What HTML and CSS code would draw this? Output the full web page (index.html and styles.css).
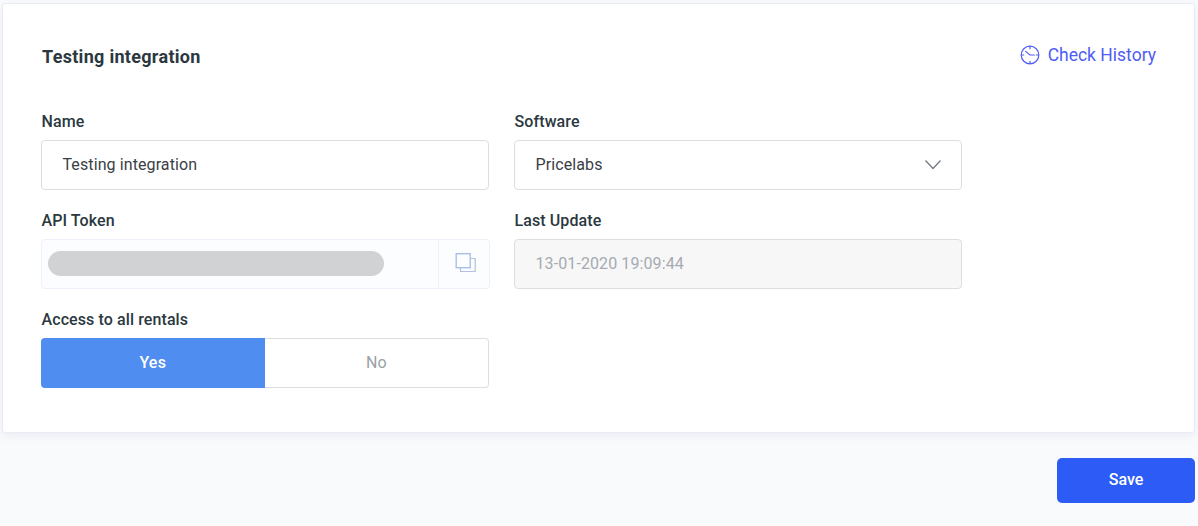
FILE: index.html
```html
<!DOCTYPE html>
<html lang="en">
<head>
<meta charset="utf-8">
<title>Testing integration</title>
<link rel="stylesheet" href="styles.css">
</head>
<body>
<main class="page">
  <section class="card">
    <header class="card-head">
      <h1 class="title">Testing integration</h1>
      <a class="history" href="#">
        <svg class="history-icon" width="20" height="20" viewBox="0 0 20 20" fill="none" stroke="currentColor" stroke-width="1.2" stroke-linecap="round"><circle cx="10" cy="10" r="8.8"/><path d="M10 1.5v2.2M10 16.3v2.2M1.5 10h2.2M16.3 10h2.2M5.6 6.4 10 10h4.4"/></svg>
        <span>Check History</span>
      </a>
    </header>
    <div class="form">
      <div class="field">
        <label class="label">Name</label>
        <div class="control">Testing integration</div>
      </div>
      <div class="field">
        <label class="label">Software</label>
        <div class="control select">
          <span>Pricelabs</span>
          <svg class="chevron" width="18" height="11" viewBox="0 0 18 11" fill="none" stroke="#6f7780" stroke-width="1.2"><path d="M1.500 1.500l7.500 8 7.500-8"/></svg>
        </div>
      </div>
      <div class="field">
        <label class="label">API Token</label>
        <div class="token">
          <div class="token-value"><div class="token-mask"></div></div>
          <div class="token-copy">
            <svg class="copy-icon" width="22" height="20" viewBox="0 0 22 20" fill="none"><rect x="1.200" y="0.700" width="14" height="14" stroke="#a9c0e6" stroke-width="1.4"/><path d="M16 5.500H20.200V18.500H5.500V15" stroke="#b4bfe2" stroke-width="1.2"/></svg>
          </div>
        </div>
      </div>
      <div class="field">
        <label class="label">Last Update</label>
        <div class="control disabled">13-01-2020 19:09:44</div>
      </div>
      <div class="field">
        <label class="label">Access to all rentals</label>
        <div class="toggle">
          <div class="toggle-opt active">Yes</div>
          <div class="toggle-opt inactive">No</div>
        </div>
      </div>
    </div>
  </section>
  <footer class="actions">
    <button class="save" type="button">Save</button>
  </footer>
</main>
</body>
</html>
```
FILE: styles.css
```css
* { box-sizing: border-box; }
html, body { margin: 0; height: 100%; }
body {
  background: #f9fafc;
  font-family: Roboto, "Liberation Sans", sans-serif;
  color: #2b3840;
  overflow: hidden;
}
.page { padding: 3px 3px 0 2px; }
.card {
  height: 430px;
  background: #fff;
  border: 1px solid #e9ebf5;
  border-radius: 3px;
  box-shadow: 0 3px 8px rgba(80, 90, 150, 0.08);
  padding: 0 38px;
}
.card-head {
  display: flex;
  justify-content: space-between;
  align-items: flex-start;
  height: 108px;
}
.title {
  margin: 41px 0 0 1px;
  font-size: 18px;
  line-height: 24px;
  font-weight: 700;
  letter-spacing: 0.3px;
  color: #2b3840;
}
.history {
  display: flex;
  align-items: center;
  gap: 8px;
  margin-top: 39px;
  font-size: 17.5px;
  line-height: 24px;
  color: #4f5cf5;
  text-decoration: none;
}
.form {
  display: grid;
  grid-template-columns: 448px 448px;
  column-gap: 25px;
  row-gap: 21px;
}
.label {
  display: block;
  padding-left: 0.5px;
  font-size: 16px;
  line-height: 20px;
  font-weight: 500;
  letter-spacing: 0.1px;
  color: #2b3840;
  margin-bottom: 8px;
}
.control {
  display: flex;
  align-items: center;
  height: 50px;
  padding: 0 20px 2px 20.5px;
  border: 1px solid #dcdfe2;
  border-radius: 4px;
  background: #fff;
  font-size: 16px;
  letter-spacing: 0.1px;
  color: #3a4046;
}
.select { justify-content: space-between; }
.chevron { margin-right: -1px; }
.disabled { background: #f7f7f7; color: #a5abb2; }
.token {
  display: flex;
  height: 50px;
  width: 449px;
  border: 1px solid #eef0fb;
  border-radius: 4px;
  background: #fcfdff;
}
.token-value { flex: 1; display: flex; align-items: center; padding: 0 0 1px 6px; }
.token-mask { width: 336px; height: 25px; border-radius: 13px; background: #d1d2d4; }
.token-copy {
  width: 51px;
  border-left: 1px solid #eef0fb;
  display: flex;
  align-items: center;
  justify-content: center;
}
.copy-icon { margin: -2px 0 0 4px; }
.toggle {
  display: flex;
  height: 50px;
}
.toggle-opt {
  flex: 1;
  display: flex;
  align-items: center;
  justify-content: center;
  font-size: 16px;
  letter-spacing: 0.1px;
  padding-bottom: 2px;
}
.active { background: #4f8df0; color: #fff; border-radius: 4px 0 0 4px; font-weight: 500; letter-spacing: 0.2px; }
.inactive {
  color: #9aa0a6;
  border: 1px solid #dcdfe2;
  border-left: 0;
  border-radius: 0 4px 4px 0;
}
.actions { display: flex; justify-content: flex-end; padding-top: 25px; }
.save {
  width: 138px;
  height: 45px;
  border: 0;
  border-radius: 5px;
  background: #2c5bf6;
  color: #fff;
  font-family: inherit;
  font-size: 16px;
  font-weight: 500;
  letter-spacing: 0;
  padding: 0 0 3px;
}
```
